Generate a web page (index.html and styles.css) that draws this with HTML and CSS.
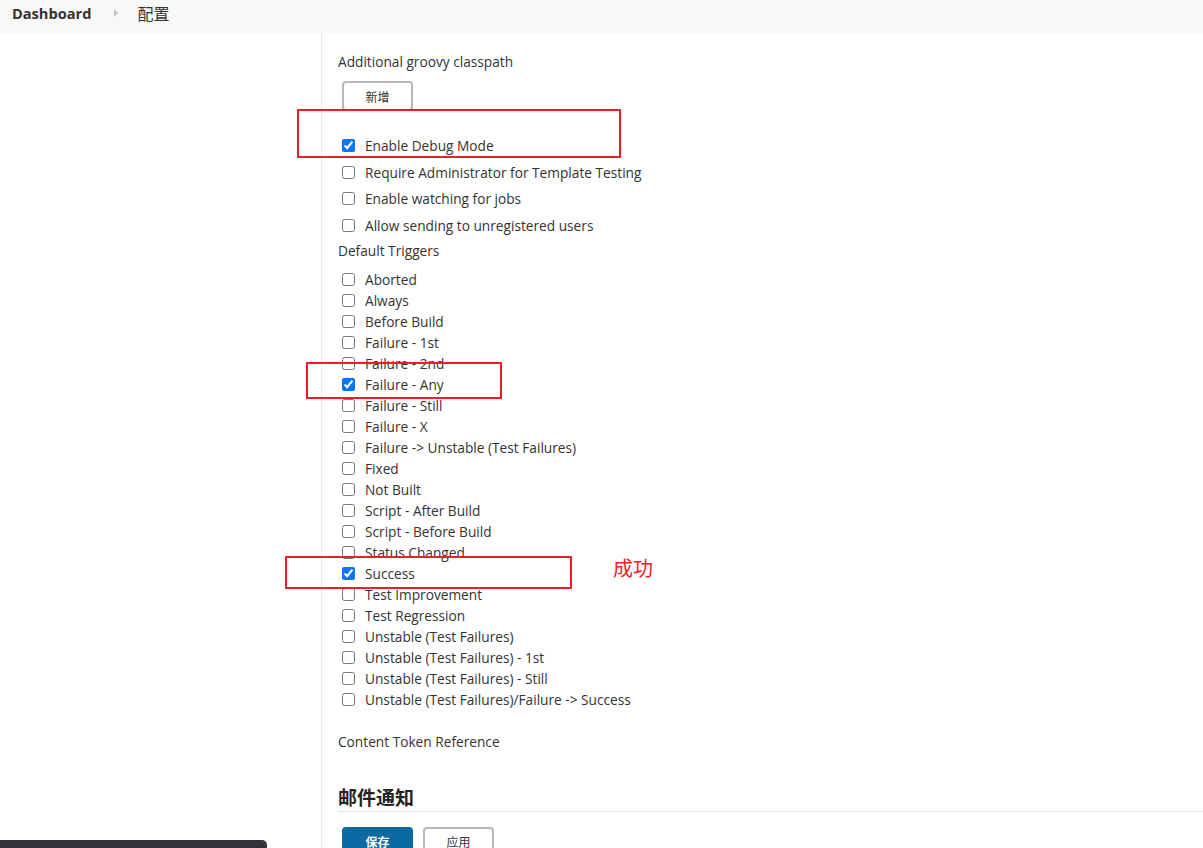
FILE: index.html
```html
<!DOCTYPE html>
<html lang="zh">
<head>
<meta charset="utf-8">
<title>配置</title>
<link rel="stylesheet" href="styles.css">
</head>
<body>
<header class="topbar">
  <a class="crumb crumb-home">Dashboard</a>
  <span class="crumb-sep"></span>
  <span class="crumb crumb-page">配置</span>
</header>
<div class="layout">
  <aside class="sidebar"></aside>
  <main class="content">
    <div class="field-label">Additional groovy classpath</div>
    <button class="btn btn-add">新增</button>
    <div class="options">
      <label class="opt"><input type="checkbox" checked><span>Enable Debug Mode</span></label>
      <label class="opt"><input type="checkbox"><span>Require Administrator for Template Testing</span></label>
      <label class="opt"><input type="checkbox"><span>Enable watching for jobs</span></label>
      <label class="opt"><input type="checkbox"><span>Allow sending to unregistered users</span></label>
    </div>
    <div class="section-label">Default Triggers</div>
    <div class="triggers">
      <label class="trig"><input type="checkbox"><span>Aborted</span></label>
      <label class="trig"><input type="checkbox"><span>Always</span></label>
      <label class="trig"><input type="checkbox"><span>Before Build</span></label>
      <label class="trig"><input type="checkbox"><span>Failure - 1st</span></label>
      <label class="trig"><input type="checkbox"><span>Failure - 2nd</span></label>
      <label class="trig"><input type="checkbox" checked><span>Failure - Any</span></label>
      <label class="trig"><input type="checkbox"><span>Failure - Still</span></label>
      <label class="trig"><input type="checkbox"><span>Failure - X</span></label>
      <label class="trig"><input type="checkbox"><span>Failure -&gt; Unstable (Test Failures)</span></label>
      <label class="trig"><input type="checkbox"><span>Fixed</span></label>
      <label class="trig"><input type="checkbox"><span>Not Built</span></label>
      <label class="trig"><input type="checkbox"><span>Script - After Build</span></label>
      <label class="trig"><input type="checkbox"><span>Script - Before Build</span></label>
      <label class="trig"><input type="checkbox"><span>Status Changed</span></label>
      <label class="trig"><input type="checkbox" checked><span>Success</span></label>
      <label class="trig"><input type="checkbox"><span>Test Improvement</span></label>
      <label class="trig"><input type="checkbox"><span>Test Regression</span></label>
      <label class="trig"><input type="checkbox"><span>Unstable (Test Failures)</span></label>
      <label class="trig"><input type="checkbox"><span>Unstable (Test Failures) - 1st</span></label>
      <label class="trig"><input type="checkbox"><span>Unstable (Test Failures) - Still</span></label>
      <label class="trig"><input type="checkbox"><span>Unstable (Test Failures)/Failure -&gt; Success</span></label>
    </div>
    <div class="token-ref">Content Token Reference</div>
    <h2 class="section-title">邮件通知</h2>
    <div class="actions">
      <button class="btn btn-primary">保存</button>
      <button class="btn btn-apply">应用</button>
    </div>
  </main>
</div>
<div class="anno anno-1"></div>
<div class="anno anno-2"></div>
<div class="anno anno-3"></div>
<div class="anno-text">成功</div>
<div class="toast"></div>
</body>
</html>
```

FILE: styles.css
```css
html, body {
  margin: 0;
  padding: 0;
  height: 848px;
  overflow: hidden;
  background: #fff;
  font-family: "Open Sans", "Noto Sans", "Noto Sans CJK SC", sans-serif;
  color: #333;
}

.topbar {
  height: 33px;
  background: #f8f8f8;
  display: flex;
  align-items: center;
  padding: 0 0 7px 12px;
  box-sizing: border-box;
}

.crumb-home {
  font-weight: 700;
  font-size: 14.6px;
  color: #333;
}

.crumb-sep {
  width: 0;
  height: 0;
  border-left: 4px solid #c4c4c4;
  border-top: 4px solid transparent;
  border-bottom: 4px solid transparent;
  margin-left: 23px;
  margin-right: 19px;
}

.crumb-page {
  font-family: "Noto Sans CJK SC", sans-serif;
  font-size: 16px;
  color: #333;
}

.layout {
  display: grid;
  grid-template-columns: 322px 1fr;
  height: 815px;
}

.sidebar {
  border-right: 1px solid #e9e9e9;
}

.content {
  padding: 19px 0 0 16px;
  font-size: 13.7px;
}

.field-label {
  height: 20px;
  line-height: 20px;
}

.btn {
  font-family: "Noto Sans CJK SC", sans-serif;
  font-size: 12px;
  height: 30px;
  width: 71px;
  border-radius: 4px;
  box-sizing: border-box;
  cursor: pointer;
}

.btn-add {
  margin: 9px 0 0 4px;
  display: block;
  background: #fff;
  border: 2px solid #b4b8bc;
  color: #333;
}

.options {
  margin-top: 21px;
  display: flex;
  flex-direction: column;
}

.opt, .trig {
  display: flex;
  align-items: center;
  margin-left: 4px;
}

.opt { height: 26.7px; }
.trig { height: 21px; }

.opt input, .trig input {
  width: 13px;
  height: 13px;
  margin: 0 10px 0 0;
  accent-color: #0a75ff;
}

.section-label {
  height: 24px;
  line-height: 24px;
}

.triggers {
  margin-top: 6px;
  display: flex;
  flex-direction: column;
}

.token-ref {
  margin-top: 22px;
  height: 20px;
  line-height: 20px;
}

.section-title {
  margin: 31px 0 0 0;
  font-family: "Noto Sans CJK SC", sans-serif;
  font-size: 19px;
  font-weight: 700;
  line-height: 28px;
  height: 28px;
  color: #222;
  border-bottom: 1px solid #e0e0e0;
}

.actions {
  margin: 15px 0 0 4px;
  display: flex;
  gap: 10px;
}

.btn-primary {
  background: #0b6aa2;
  border: none;
  color: #fff;
  font-weight: 700;
}

.btn-apply {
  background: #fff;
  border: 2px solid #b4b8bc;
  color: #333;
}

.anno {
  position: absolute;
  border: 2px solid #e8202a;
  box-sizing: border-box;
}
.anno-1 { left: 297px; top: 109px; width: 324px; height: 49px; }
.anno-2 { left: 306px; top: 362px; width: 196px; height: 37px; }
.anno-3 { left: 285px; top: 556px; width: 287px; height: 33px; }

.anno-text {
  position: absolute;
  left: 613px;
  top: 555px;
  font-family: "Noto Sans CJK SC", sans-serif;
  font-size: 20px;
  line-height: 26px;
  color: #ee2222;
}

.toast {
  position: absolute;
  left: 0;
  top: 840px;
  width: 267px;
  height: 20px;
  background: #333438;
  border-top-right-radius: 5px;
}
```
